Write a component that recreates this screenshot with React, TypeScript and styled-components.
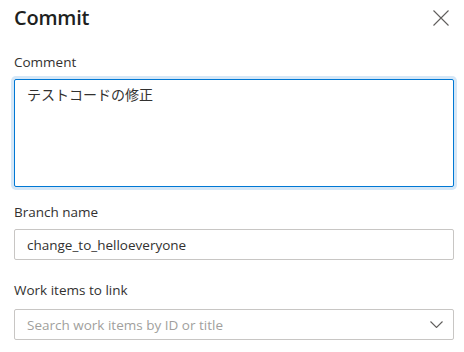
import React, { useState } from 'react';
import styled, { createGlobalStyle } from 'styled-components';

const GlobalStyle = createGlobalStyle`
  html, body {
    margin: 0;
    padding: 0;
    background: #ffffff;
  }
  body {
    font-family: "Open Sans", "Noto Sans", "Noto Sans CJK JP", sans-serif;
    color: #323130;
  }
`;

const Panel = styled.div`
  width: 464px;
  height: 352px;
  box-sizing: border-box;
  padding: 2px 10px 0 14px;
  background: #ffffff;
  overflow: hidden;
`;

const Header = styled.div`
  display: flex;
  align-items: center;
  justify-content: space-between;
  height: 31px;
`;

const Title = styled.h1`
  margin: 0;
  font-size: 20px;
  line-height: 28px;
  font-weight: 600;
  color: #201f1e;
  letter-spacing: -0.2px;
`;

const CloseButton = styled.button`
  display: flex;
  align-items: center;
  justify-content: center;
  width: 24px;
  height: 24px;
  margin-right: 1px;
  padding: 0;
  border: none;
  background: transparent;
  cursor: pointer;
  color: #605e5c;
`;

const Field = styled.div<{ top: number }>`
  display: flex;
  flex-direction: column;
  margin-top: ${p => p.top}px;
`;

const Label = styled.label<{ gap?: number }>`
  font-size: 13.5px;
  line-height: 20px;
  color: #323130;
  margin-bottom: ${p => p.gap ?? 7}px;
`;

const TextArea = styled.textarea`
  box-sizing: border-box;
  width: 440px;
  height: 108px;
  margin: 0;
  padding: 5px 12px;
  border: 1px solid #0078d4;
  border-radius: 2px;
  box-shadow: 0 0 0 3px #d5e7f7;
  outline: none;
  resize: none;
  font-family: "Open Sans", "Noto Sans CJK JP", sans-serif;
  font-size: 14px;
  line-height: 20px;
  color: #323130;
`;

const Input = styled.input`
  box-sizing: border-box;
  width: 440px;
  height: 31px;
  margin: 0;
  padding: 0 12px;
  border: 1px solid #c8c6c4;
  border-radius: 2px;
  outline: none;
  font-family: "Open Sans", sans-serif;
  font-size: 13.5px;
  color: #323130;
`;

const Dropdown = styled.div`
  box-sizing: border-box;
  display: flex;
  align-items: center;
  justify-content: space-between;
  width: 440px;
  height: 31px;
  padding: 0 10px 0 12px;
  border: 1px solid #c8c6c4;
  border-radius: 2px;
`;

const Placeholder = styled.span`
  font-size: 13.5px;
  color: #a19f9d;
`;

export default function App() {
  const [comment, setComment] = useState('テストコードの修正');
  const [branch, setBranch] = useState('change_to_helloeveryone');

  return (
    <>
      <GlobalStyle />
      <Panel>
        <Header>
          <Title>Commit</Title>
          <CloseButton aria-label="Close">
            <svg width="16" height="16" viewBox="0 0 16 16">
              <path d="M0.5 0.5 L15.5 15.5 M15.5 0.5 L0.5 15.5" stroke="#605e5c" strokeWidth="1.1" fill="none" />
            </svg>
          </CloseButton>
        </Header>

        <Field top={19}>
          <Label>Comment</Label>
          <TextArea value={comment} onChange={e => setComment(e.target.value)} />
        </Field>

        <Field top={15}>
          <Label>Branch name</Label>
          <Input value={branch} onChange={e => setBranch(e.target.value)} />
        </Field>

        <Field top={20}>
          <Label gap={9}>Work items to link</Label>
          <Dropdown>
            <Placeholder>Search work items by ID or title</Placeholder>
            <svg width="13" height="7" viewBox="0 0 13 7">
              <path d="M0.5 0.5 L6.5 6.5 L12.5 0.5" stroke="#605e5c" strokeWidth="1.1" fill="none" />
            </svg>
          </Dropdown>
        </Field>
      </Panel>
    </>
  );
}
